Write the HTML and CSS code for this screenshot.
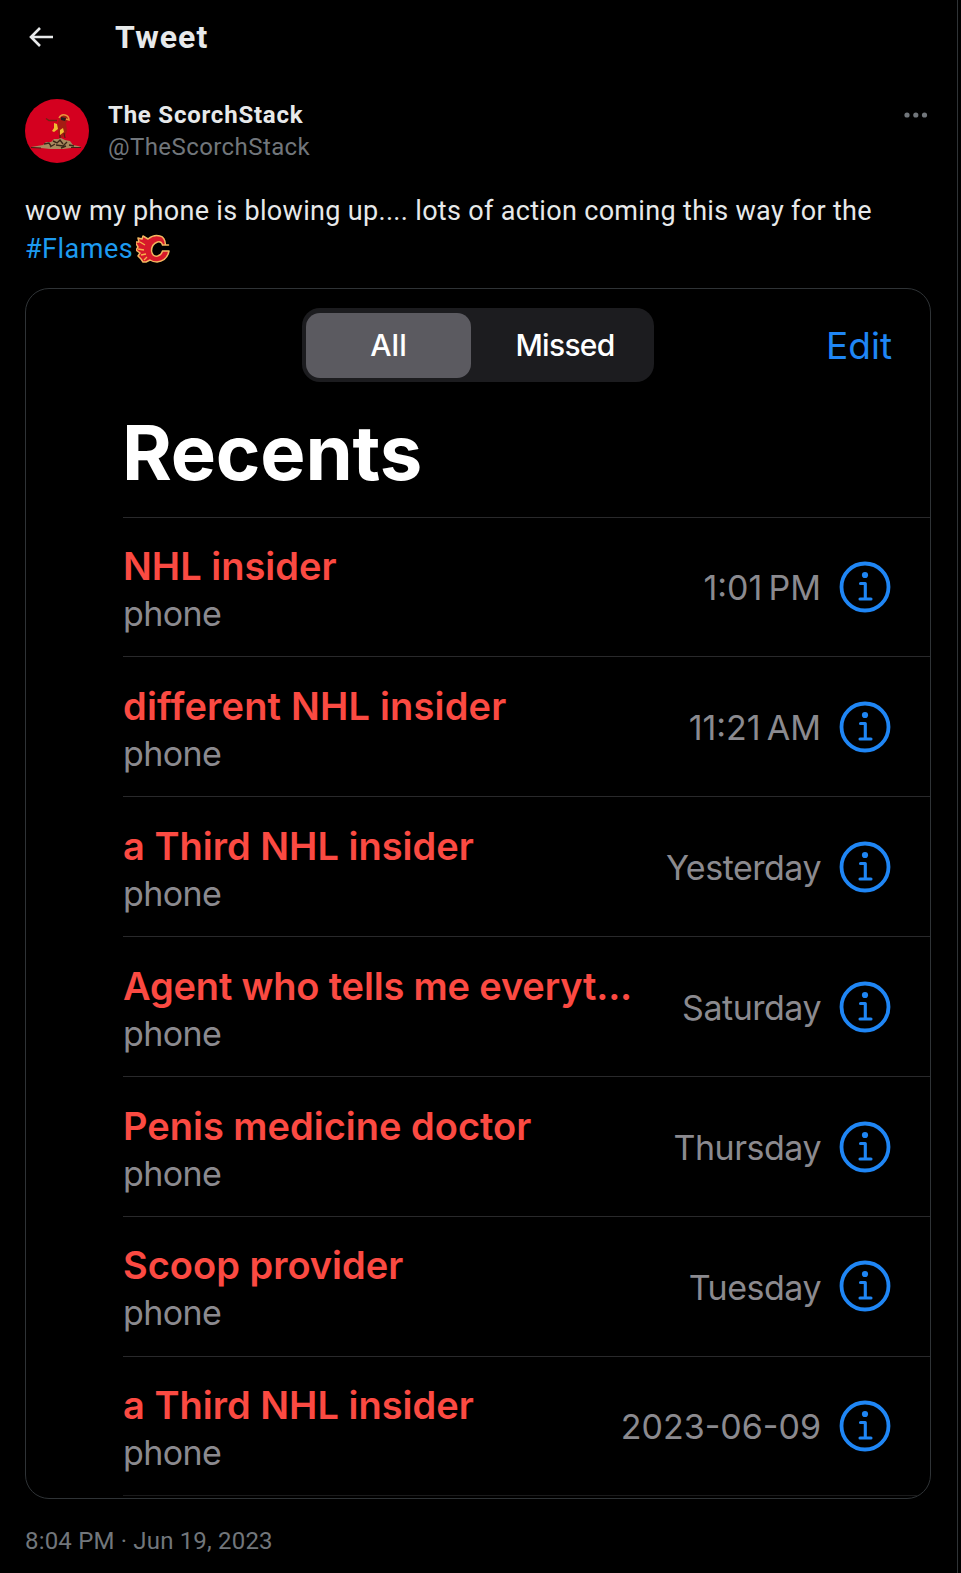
FILE: index.html
```html
<!DOCTYPE html>
<html lang="en">
<head>
    <meta charset="UTF-8">
    <meta name="viewport" content="width=device-width, initial-scale=1.0">
    <title>Tweet</title>
    <link rel="stylesheet" href="styles.css">
</head>
<body>
    <svg class="defs" width="0" height="0">
        <symbol id="info" viewBox="0 0 52 52">
            <circle cx="26" cy="26" r="23.5" fill="none" stroke="currentColor" stroke-width="3.8"/>
            <circle cx="26" cy="14" r="3.1" fill="currentColor"/>
            <path d="M21.5 22.5h4.8v15.5M21 38h11" fill="none" stroke="currentColor" stroke-width="3.1" stroke-linecap="round" stroke-linejoin="round"/>
        </symbol>
    </svg>

    <main class="column">
        <header class="top-bar">
            <svg class="back" viewBox="0 0 24 20" fill="none" stroke="#e7e9ea" stroke-width="2.6">
                <path d="M11 1L2 10l9 9M2 10h22"/>
            </svg>
            <h1>Tweet</h1>
        </header>

        <article class="tweet">
            <div class="author">
                <svg class="avatar" viewBox="0 0 64 64">
                    <circle cx="32" cy="32" r="32" fill="#d4001f"/>
                    <path d="M6 48l12-2 3-3 5 0 3-3 4 0 3-1 4 2 5 1 3 4 5 1 3 1-10 1-8 1-13 0-9-1z" fill="#a98a5e"/>
                    <path d="M19 45l5-1 2 3M28 42l4 2 3-3 3 4M31 46l7 1 4-4M44 46l5 1M25 48l5-3M36 49l5-2" fill="none" stroke="#3a2718" stroke-width="1.4"/>
                    <path d="M6 48.5l10 .5M46 48.5l10 0" stroke="#3a2718" stroke-width="1"/>
                    <path d="M34 20l3-4 5 0 1 5-2 3 1 8-2 5-5 2-2-6-1-6z" fill="#a51c13"/>
                    <path d="M21 19.500l3 2 8 0" fill="none" stroke="#6b2413" stroke-width="1.5"/>
                    <path d="M29 24l3 1 1 5-4 3-2-1 2-3zM35 31l3-2 1 4-4 3z" fill="#f0bd30"/>
                    <path d="M34 19q2-4 6-3 4 1 4 5l-3-1" fill="none" stroke="#e8923b" stroke-width="1.5"/>
                    <path d="M36 18l5 1-1 3-4-1z" fill="#26181d"/>
                    <path d="M35 36l0 3M39 34l1 5" stroke="#5a1a10" stroke-width="1.2"/>
                </svg>
                <div class="names">
                    <strong class="name">The ScorchStack</strong>
                    <span class="handle">@TheScorchStack</span>
                </div>
                <svg class="more" viewBox="0 0 24 6" fill="#71767b">
                    <circle cx="3" cy="3" r="2.6"/>
                    <circle cx="11.8" cy="3" r="2.6"/>
                    <circle cx="20.5" cy="3" r="2.6"/>
                </svg>
            </div>

            <p class="text">wow my phone is blowing up.... lots of action coming this way for the<br><a class="tag">#Flames</a><svg class="flame" viewBox="0 0 34 30">
                    <path d="M32.500 11h-6q-1-4-5-3-6 2-6 9 1 6 6 5 4-1 5-5h6.500q-2 10-12 11-4 0-7-2l-4 2-3 0-2-3-3-3 2-3-4-3 2-3-3-5 4 0-1-4 4 1 1-3 5 3q6-5 12-3 5 1 5.500 9z" fill="#d7182a" stroke="#f4b65f" stroke-width="1.500" stroke-linejoin="round"/>
                    <path d="M4 8l5 3M2 15l6 1M5 21l5-1M8 26l3-3" fill="none" stroke="#f6b04a" stroke-width="1.4"/>
                </svg></p>

            <section class="phone">
                <div class="phone-nav">
                    <div class="segmented">
                        <span class="segment active">All</span>
                        <span class="segment">Missed</span>
                    </div>
                    <span class="edit">Edit</span>
                </div>
                <h2>Recents</h2>
                <ul class="calls">
                    <li>
                        <div class="caller"><b>NHL insider</b><span>phone</span></div>
                        <time class="clock">1:01&#8201;PM</time>
                        <svg class="info"><use href="#info"/></svg>
                    </li>
                    <li>
                        <div class="caller"><b class="wide">different NHL insider</b><span>phone</span></div>
                        <time class="clock">11:21&#8201;AM</time>
                        <svg class="info"><use href="#info"/></svg>
                    </li>
                    <li>
                        <div class="caller"><b>a Third NHL insider</b><span>phone</span></div>
                        <time>Yesterday</time>
                        <svg class="info"><use href="#info"/></svg>
                    </li>
                    <li>
                        <div class="caller"><b class="tight">Agent who tells me everyt...</b><span>phone</span></div>
                        <time>Saturday</time>
                        <svg class="info"><use href="#info"/></svg>
                    </li>
                    <li>
                        <div class="caller"><b>Penis medicine doctor</b><span>phone</span></div>
                        <time>Thursday</time>
                        <svg class="info"><use href="#info"/></svg>
                    </li>
                    <li>
                        <div class="caller"><b>Scoop provider</b><span>phone</span></div>
                        <time>Tuesday</time>
                        <svg class="info"><use href="#info"/></svg>
                    </li>
                    <li>
                        <div class="caller"><b>a Third NHL insider</b><span>phone</span></div>
                        <time class="clock">2023-06-09</time>
                        <svg class="info"><use href="#info"/></svg>
                    </li>
                </ul>
            </section>

            <p class="date">8:04 PM · Jun 19, 2023</p>
        </article>
    </main>
</body>
</html>
```
FILE: styles.css
```css
* {
    box-sizing: border-box;
}
body {
    margin: 0;
    background-color: #000;
    color: #e7e9ea;
    font-family: Roboto, "Liberation Sans", sans-serif;
}
h1, h2, p, ul {
    margin: 0;
    padding: 0;
}
.defs {
    display: block;
}
.column {
    width: 958px;
    height: 1573px;
    border-right: 1px solid #2f3336;
    overflow: hidden;
}
.top-bar {
    display: flex;
    align-items: center;
    height: 74px;
    padding-left: 29px;
}
.back {
    width: 24px;
    height: 20px;
    margin-right: 62px;
}
.top-bar h1 {
    font-size: 32px;
    line-height: 38px;
    font-weight: 700;
    letter-spacing: 1.1px;
}
.tweet {
    padding: 25px 26px 0 25px;
}
.author {
    display: flex;
    height: 64px;
}
.avatar {
    width: 64px;
    height: 64px;
    margin-right: 19px;
}
.names {
    display: flex;
    flex-direction: column;
    flex: 1;
}
.name, .handle {
    font-size: 24px;
    line-height: 32px;
}
.name {
    letter-spacing: 0.78px;
}
.handle {
    color: #71767b;
    letter-spacing: 0.42px;
}
.more {
    width: 24px;
    height: 6px;
    margin-top: 13px;
    margin-right: 3px;
}
.text {
    height: 76px;
    margin-top: 29px;
    font-size: 27px;
    line-height: 38px;
    letter-spacing: 0.32px;
    white-space: nowrap;
}
.tag {
    color: #1d9bf0;
    letter-spacing: 0.5px;
}
.flame {
    width: 34px;
    height: 30px;
    margin-left: 3px;
    vertical-align: -6px;
}
.phone {
    height: 1211px;
    margin-top: 20px;
    border: 1px solid #2f3336;
    border-radius: 24px;
    overflow: hidden;
    font-family: Inter, sans-serif;
}
.phone-nav {
    display: flex;
    justify-content: space-between;
    align-items: center;
    height: 74px;
    margin-top: 19px;
    padding: 0 38px 0 276px;
}
.segmented {
    display: flex;
    width: 352px;
    height: 74px;
    padding: 5px 4px 4px;
    border-radius: 18px;
    background-color: #1c1c1f;
}
.segment {
    flex: 1;
    padding-left: 9px;
    border-radius: 14px;
    color: #fff;
    font-size: 30px;
    font-weight: 500;
    line-height: 65px;
    letter-spacing: -0.7px;
    text-align: center;
}
.segment.active {
    flex: 0 0 165px;
    padding: 0;
    background-color: #5b5a60;
    letter-spacing: 0;
}
.edit {
    color: #1f86f5;
    font-size: 37px;
}
.phone h2 {
    height: 134.5px;
    padding: 24px 0 0 96px;
    color: #fff;
    font-size: 76px;
    font-weight: 700;
    line-height: 92px;
    letter-spacing: -0.2px;
}
.calls {
    margin-left: 97px;
    list-style: none;
}
.calls li {
    display: flex;
    align-items: center;
    height: 139.9px;
    padding-right: 39px;
    border-top: 1px solid #29292b;
}
.calls li:last-child {
    border-bottom: 1px solid #1a1a1b;
}
.caller {
    display: flex;
    flex-direction: column;
    flex: 1;
    padding-top: 4px;
    white-space: nowrap;
}
.caller b {
    color: #fb4a42;
    font-size: 38px;
    font-weight: 600;
    line-height: 50px;
}
.caller .wide {
    letter-spacing: 0.18px;
}
.caller .tight {
    letter-spacing: -0.17px;
}
.caller span {
    color: #8b8a8f;
    font-size: 34px;
    line-height: 46px;
    letter-spacing: -0.6px;
}
.calls time {
    margin-top: 2px;
    color: #8b8a8f;
    font-size: 34px;
    letter-spacing: -0.5px;
}
.calls .clock {
    letter-spacing: 0;
}
.info {
    width: 52px;
    height: 52px;
    margin-left: 18px;
    color: #1f86f5;
}
.date {
    margin-top: 25px;
    color: #71767b;
    font-size: 24px;
    line-height: 34px;
    letter-spacing: 0.18px;
}
```
